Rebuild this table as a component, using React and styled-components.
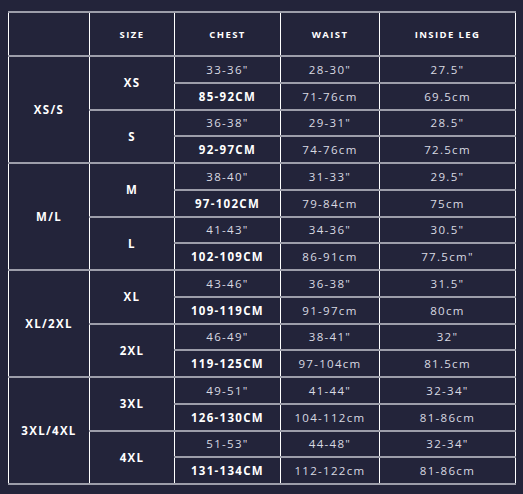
import React from "react"
import styled, { createGlobalStyle } from "styled-components"

const GlobalStyle = createGlobalStyle`
  html, body {
    margin: 0;
    background: #23243a;
  }
  body {
    font-family: "Open Sans", "Liberation Sans", sans-serif;
  }
`

const Page = styled.div`
  padding: 11px 8px 10px 8px;
  width: 507px;
`

const Table = styled.table`
  width: 507px;
  border-collapse: collapse;
  table-layout: fixed;
  color: #ffffff;
`

const Cell = styled.td`
  height: ${(p) => (p.head ? "42px" : "24.75px")};
  padding: 0;
  text-align: center;
  vertical-align: middle;
  border-top: 2px solid #9d9eaa;
  border-bottom: 2px solid #9d9eaa;
  border-left: 1px solid #ffffff;
  border-right: 1px solid #ffffff;
  font-size: ${(p) => (p.head ? "9.5px" : "11.5px")};
  font-weight: ${(p) => (p.bold ? 700 : 400)};
  letter-spacing: ${(p) => (p.head ? "1.4px" : "1.3px")};
  color: ${(p) => (p.bold ? "#ffffff" : "#d9dae2")};
  white-space: nowrap;
`

const groups = [
  {
    name: "XS/S",
    sizes: [
      { size: "XS", inch: ["33-36\"", "28-30\"", "27.5\""], cm: ["85-92CM", "71-76cm", "69.5cm"] },
      { size: "S", inch: ["36-38\"", "29-31\"", "28.5\""], cm: ["92-97CM", "74-76cm", "72.5cm"] },
    ],
  },
  {
    name: "M/L",
    sizes: [
      { size: "M", inch: ["38-40\"", "31-33\"", "29.5\""], cm: ["97-102CM", "79-84cm", "75cm"] },
      { size: "L", inch: ["41-43\"", "34-36\"", "30.5\""], cm: ["102-109CM", "86-91cm", "77.5cm\""] },
    ],
  },
  {
    name: "XL/2XL",
    sizes: [
      { size: "XL", inch: ["43-46\"", "36-38\"", "31.5\""], cm: ["109-119CM", "91-97cm", "80cm"] },
      { size: "2XL", inch: ["46-49\"", "38-41\"", "32\""], cm: ["119-125CM", "97-104cm", "81.5cm"] },
    ],
  },
  {
    name: "3XL/4XL",
    sizes: [
      { size: "3XL", inch: ["49-51\"", "41-44\"", "32-34\""], cm: ["126-130CM", "104-112cm", "81-86cm"] },
      { size: "4XL", inch: ["51-53\"", "44-48\"", "32-34\""], cm: ["131-134CM", "112-122cm", "81-86cm"] },
    ],
  },
]

const SizeChart = () => {
  return (
    <Page>
      <Table>
        <colgroup>
          <col style={{ width: 81 }} />
          <col style={{ width: 85 }} />
          <col style={{ width: 106 }} />
          <col style={{ width: 99 }} />
          <col style={{ width: 136 }} />
        </colgroup>
        <thead>
          <tr>
            <Cell as="th" head bold></Cell>
            <Cell as="th" head bold>SIZE</Cell>
            <Cell as="th" head bold>CHEST</Cell>
            <Cell as="th" head bold>WAIST</Cell>
            <Cell as="th" head bold>INSIDE LEG</Cell>
          </tr>
        </thead>
        <tbody>
          {groups.map((g) =>
            g.sizes.map((s, si) => (
              <React.Fragment key={s.size}>
                <tr>
                  {si === 0 && (
                    <Cell rowSpan={4} bold>
                      {g.name}
                    </Cell>
                  )}
                  <Cell rowSpan={2} bold>
                    {s.size}
                  </Cell>
                  <Cell>{s.inch[0]}</Cell>
                  <Cell>{s.inch[1]}</Cell>
                  <Cell>{s.inch[2]}</Cell>
                </tr>
                <tr>
                  <Cell bold>{s.cm[0]}</Cell>
                  <Cell>{s.cm[1]}</Cell>
                  <Cell>{s.cm[2]}</Cell>
                </tr>
              </React.Fragment>
            ))
          )}
        </tbody>
      </Table>
    </Page>
  )
}

export default function App() {
  return (
    <>
      <GlobalStyle />
      <SizeChart />
    </>
  )
}
